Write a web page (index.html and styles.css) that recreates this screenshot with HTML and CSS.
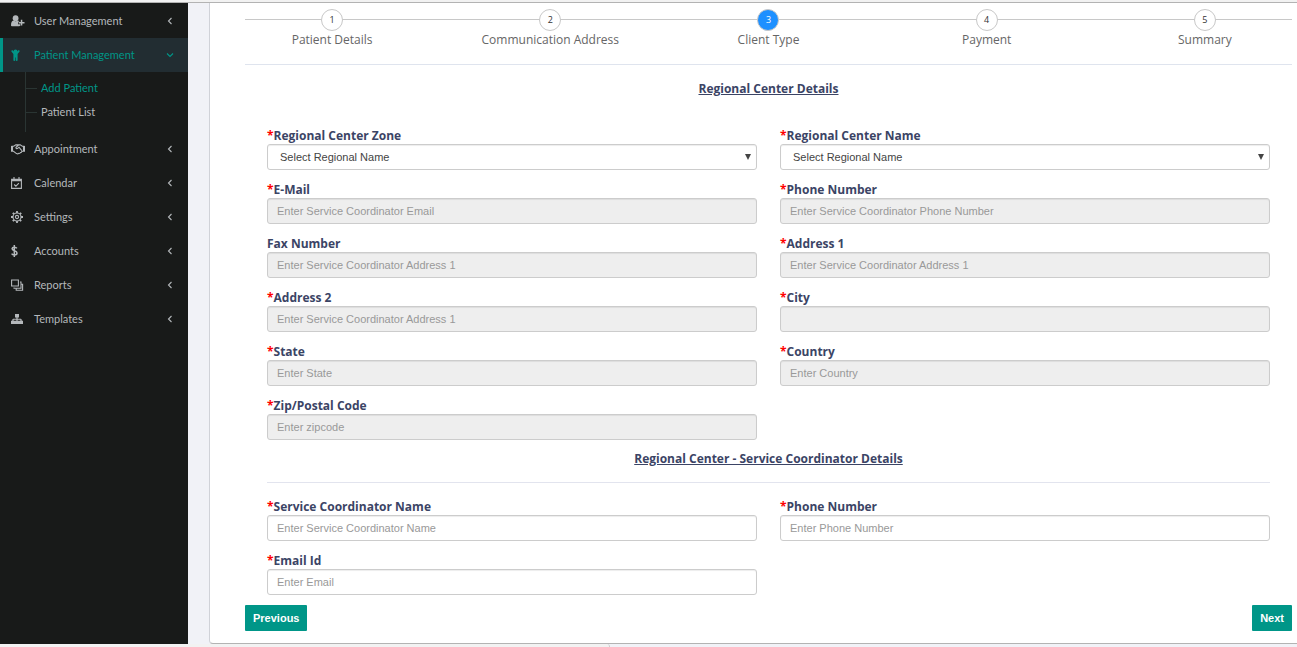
FILE: index.html
```html
<!DOCTYPE html>
<html lang="en">
<head>
<meta charset="utf-8">
<title>Add Patient</title>
<meta name="viewport" content="width=device-width, initial-scale=1">
<link rel="stylesheet" href="styles.css">
</head>
<body>
<div class="app">
  <nav class="sidebar" aria-label="Main">
    <ul class="menu">
      <li><a class="menu-item" href="#users">
        <svg class="icon" viewBox="0 0 14 12"><circle cx="4.6" cy="3.2" r="2.9"/><path d="M0 10.500c0-3 .8-4.700 2.400-4.900 1.300 1 3.100 1 4.400 0 .7.100 1.200.500 1.600 1.100H7v2.600h2.300v1.500c-.3.300-.7.400-1.200.400H1.400C.5 11.200 0 11 0 10.500z"/><path d="M9.800 4.700h1.500v2.200h2.200v1.500h-2.200v2.200H9.800V8.400H7.600V6.900h2.200z"/></svg>
        <span class="menu-text">User Management</span>
        <svg class="arrow" viewBox="0 0 8 8"><path d="M5.500 1 2.500 4l3 3"/></svg></a></li>
      <li><a class="menu-item menu-item-active" href="#patients">
        <svg class="icon" viewBox="0 0 14 12"><circle cx="4.500" cy="2.400" r="2"/><path d="M.6 1.500c.4-.4 1-.4 1.400 0L4 3.900h1L7 1.500c.4-.4 1-.4 1.400 0 .3.400.3.900 0 1.300L6.600 5v6.200c0 1-1.800 1-1.800 0V8.600h-.6v2.600c0 1-1.800 1-1.800 0V5L.6 2.800c-.3-.4-.3-.9 0-1.300z"/></svg>
        <span class="menu-text">Patient Management</span>
        <svg class="arrow" viewBox="0 0 8 8"><path d="M1 2.500l3 3 3-3"/></svg></a>
        <ul class="submenu">
          <li><a class="submenu-item submenu-item-active" href="#add">Add Patient</a></li>
          <li><a class="submenu-item" href="#list">Patient List</a></li>
        </ul></li>
      <li><a class="menu-item" href="#appointment">
        <svg class="icon icon-line" viewBox="0 0 14 12"><path d="M.5 3v5.700M13.500 3v5.700M1.500 3v5.700M12.500 3v5.700M.5 3.200h2.200L4.800 1.900h4.400l2.100 1.300h2.200M.5 8.300h2l3 2.300c1 .5 1.700.3 2.300-.2.900.2 1.400-.2 1.700-.8.800 0 1.200-.4 1.300-1.100l.7-.3h2M7.500 2 5 4.400c-.3.900.8 1.600 1.700.9L8 4.200l2.800 3.500"/></svg>
        <span class="menu-text">Appointment</span>
        <svg class="arrow" viewBox="0 0 8 8"><path d="M5.500 1 2.500 4l3 3"/></svg></a></li>
      <li><a class="menu-item" href="#calendar">
        <svg class="icon icon-line" viewBox="0 0 14 12"><path d="M.6 2.200h9.800v9.200H.6zM.6 3h9.800M.6 3.800h9.800M3 .1v2.500M8 .1v2.500M3.200 7.500l1.700 1.700 3-3"/></svg>
        <span class="menu-text">Calendar</span>
        <svg class="arrow" viewBox="0 0 8 8"><path d="M5.500 1 2.500 4l3 3"/></svg></a></li>
      <li><a class="menu-item" href="#settings">
        <svg class="icon icon-line" viewBox="0 0 14 12"><circle cx="6" cy="6" r="1.600"/><circle cx="6" cy="6" r="4"/><path stroke-width="1.800" d="M6 0v2M6 10v2M0 6h2M10 6h2M1.800 1.800l1.400 1.400M8.800 8.800l1.400 1.400M10.200 1.800 8.800 3.200M3.200 8.800l-1.400 1.400"/></svg>
        <span class="menu-text">Settings</span>
        <svg class="arrow" viewBox="0 0 8 8"><path d="M5.500 1 2.500 4l3 3"/></svg></a></li>
      <li><a class="menu-item" href="#accounts">
        <svg class="icon icon-bold" viewBox="0 0 14 12"><path d="M3.300 0v12M5.800 3.400C5.200 2 1.300 1.500 1.100 3.600c-.1 2.500 4.900 1.900 4.900 4.500C5.900 10.600 1.500 10.500.6 8.600"/></svg>
        <span class="menu-text">Accounts</span>
        <svg class="arrow" viewBox="0 0 8 8"><path d="M5.500 1 2.500 4l3 3"/></svg></a></li>
      <li><a class="menu-item" href="#reports">
        <svg class="icon icon-line" viewBox="0 0 14 12"><path d="M.6 1h6.800v6H.6zM9 3h1v6.200H3V8.500M10.200 5.200h1.400v6H5.200V9.500"/></svg>
        <span class="menu-text">Reports</span>
        <svg class="arrow" viewBox="0 0 8 8"><path d="M5.500 1 2.500 4l3 3"/></svg></a></li>
      <li><a class="menu-item" href="#templates">
        <svg class="icon" viewBox="0 0 14 12"><path d="M4 1h4v3.400H6.600v1.300h3.300l.8.800v1.200h1.300V11H8V7.700h1.400v-1H6.600v1H8V11H4V7.700h1.400v-1H2.600v1H4V11H0V7.700h1.300V6.500l.8-.8h3.300V4.400H4z"/></svg>
        <span class="menu-text">Templates</span>
        <svg class="arrow" viewBox="0 0 8 8"><path d="M5.500 1 2.500 4l3 3"/></svg></a></li>
    </ul>
  </nav>

  <main class="content">
    <form class="card">
      <ol class="steps">
        <li class="step"><span class="step-number">1</span><span>Patient Details</span></li>
        <li class="step"><span class="step-number">2</span><span>Communication Address</span></li>
        <li class="step" aria-current="step"><span class="step-number step-number-current">3</span><span>Client Type</span></li>
        <li class="step"><span class="step-number">4</span><span>Payment</span></li>
        <li class="step"><span class="step-number">5</span><span>Summary</span></li>
      </ol>

      <section class="section">
        <h2 class="section-title">Regional Center Details</h2>
        <div class="fields">
          <div class="field"><label for="zone"><span class="required">*</span>Regional Center Zone</label>
            <div class="select-wrap"><select class="control select" id="zone"><option>Select Regional Name</option></select></div></div>
          <div class="field"><label for="center"><span class="required">*</span>Regional Center Name</label>
            <div class="select-wrap"><select class="control select" id="center"><option>Select Regional Name</option></select></div></div>
          <div class="field"><label for="email"><span class="required">*</span>E-Mail</label>
            <input class="control" id="email" type="email" placeholder="Enter Service Coordinator Email" disabled></div>
          <div class="field"><label for="phone"><span class="required">*</span>Phone Number</label>
            <input class="control" id="phone" type="tel" placeholder="Enter Service Coordinator Phone Number" disabled></div>
          <div class="field"><label for="fax">Fax Number</label>
            <input class="control" id="fax" type="text" placeholder="Enter Service Coordinator Address 1" disabled></div>
          <div class="field"><label for="address1"><span class="required">*</span>Address 1</label>
            <input class="control" id="address1" type="text" placeholder="Enter Service Coordinator Address 1" disabled></div>
          <div class="field"><label for="address2"><span class="required">*</span>Address 2</label>
            <input class="control" id="address2" type="text" placeholder="Enter Service Coordinator Address 1" disabled></div>
          <div class="field"><label for="city"><span class="required">*</span>City</label>
            <input class="control" id="city" type="text" disabled></div>
          <div class="field"><label for="state"><span class="required">*</span>State</label>
            <input class="control" id="state" type="text" placeholder="Enter State" disabled></div>
          <div class="field"><label for="country"><span class="required">*</span>Country</label>
            <input class="control" id="country" type="text" placeholder="Enter Country" disabled></div>
          <div class="field"><label for="zip"><span class="required">*</span>Zip/Postal Code</label>
            <input class="control" id="zip" type="text" placeholder="Enter zipcode" disabled></div>
        </div>
      </section>

      <section class="section section-coordinator">
        <h2 class="section-title">Regional Center - Service Coordinator Details</h2>
        <div class="fields">
          <div class="field"><label for="sc-name"><span class="required">*</span>Service Coordinator Name</label>
            <input class="control" id="sc-name" type="text" placeholder="Enter Service Coordinator Name"></div>
          <div class="field"><label for="sc-phone"><span class="required">*</span>Phone Number</label>
            <input class="control" id="sc-phone" type="tel" placeholder="Enter Phone Number"></div>
          <div class="field"><label for="sc-email"><span class="required">*</span>Email Id</label>
            <input class="control" id="sc-email" type="email" placeholder="Enter Email"></div>
        </div>
      </section>

      <div class="actions">
        <button class="button" type="button">Previous</button>
        <button class="button" type="button">Next</button>
      </div>
    </form>
  </main>
</div>
<div class="status-bar"><div class="status-tab"></div></div>
</body>
</html>
```
FILE: styles.css
```css
* { box-sizing: border-box; }

body {
  margin: 0;
  min-height: 100vh;
  display: flex;
  flex-direction: column;
  border-top: 2px solid #f2f2f2;
  background: #f1f2f7;
  font: 12px/18px "Open Sans", sans-serif;
  color: #3b4465;
}

ul, ol { margin: 0; padding: 0; list-style: none; }

.app {
  flex: 1;
  display: flex;
  border-top: 1px solid #b3b3b3;
}

/* Sidebar */
.sidebar {
  flex: 0 0 188px;
  background: #181a19;
  font-family: Lato, sans-serif;
  font-size: 11px;
}
.menu { padding-top: 1px; }
.menu-item {
  display: flex;
  align-items: center;
  height: 34px;
  padding: 0 14px 0 8px;
  border-left: 3px solid transparent;
  color: #b4b8bb;
  text-decoration: none;
}
.menu-item-active {
  background: #222d32;
  border-left-color: #009688;
  color: #009688;
}
.menu-text { flex: 1; }
.icon {
  width: 14px;
  height: 12px;
  margin-right: 9px;
  fill: currentColor;
}
.icon-line { fill: none; stroke: currentColor; stroke-width: 1.1; }
.icon-bold { fill: none; stroke: currentColor; stroke-width: 1.5; }
.arrow {
  width: 8px;
  height: 8px;
  fill: none;
  stroke: currentColor;
  stroke-width: 1.1;
}
.submenu {
  margin-left: 25px;
  padding: 4px 0 8px;
  border-left: 1px solid #2a3533;
}
.submenu-item {
  display: flex;
  align-items: center;
  gap: 4px;
  height: 24px;
  color: #b4b8bb;
  text-decoration: none;
}
.submenu-item::before {
  content: "";
  width: 11px;
  border-top: 1px solid #2a3533;
}
.submenu-item-active { color: #009688; }

/* Card */
.content {
  flex: 1;
  display: flex;
  padding-left: 21px;
}
.card {
  flex: 1;
  padding: 6px 5px 12px 35px;
  background: #fff;
  border: 1px solid #d0d2d8;
  border-width: 0 0 1px 1px;
  border-bottom-color: #b3b3b3;
  border-radius: 0 0 0 4px;
}

/* Step indicator */
.steps {
  display: grid;
  grid-template-columns: repeat(5, 1fr);
  column-gap: 44px;
  height: 56px;
  border-bottom: 1px solid #dfe4ee;
  background: linear-gradient(#c8c8c8, #c8c8c8) 0 10px / 100% 1px no-repeat;
}
.step {
  display: flex;
  flex-direction: column;
  align-items: center;
  white-space: nowrap;
  color: #666;
}
.step-number {
  width: 22px;
  height: 22px;
  border: 1px solid #c8c8c8;
  border-radius: 50%;
  background: #fff;
  font-size: 9px;
  line-height: 20px;
  text-align: center;
  color: #333;
}
.step-number-current {
  background: #1e90ff;
  color: #fff;
}

/* Form */
.section { padding: 15px 22px 0; }
.section-title {
  margin: 0 0 29px;
  font-size: 12px;
  line-height: 18px;
  text-align: center;
  text-decoration: underline;
}
.section-coordinator { padding-top: 10px; }
.section-coordinator .section-title { margin-bottom: 14px; }
.section-coordinator .fields {
  padding-top: 15px;
  border-top: 1px solid #e2e4ee;
}
.fields {
  display: grid;
  grid-template-columns: 1fr 1fr;
  gap: 11px 23px;
}
.field label {
  display: block;
  line-height: 17px;
  font-weight: 700;
}
.required { color: #f00; }
.control {
  display: block;
  width: 100%;
  height: 26px;
  padding: 0 9px;
  border: 1px solid #ccc;
  border-radius: 3px;
  background: #fff;
  box-shadow: inset 0 1px 1px rgba(0, 0, 0, .075);
  font: 11px "Liberation Sans", sans-serif;
  color: #444;
}
.control::placeholder { color: #999; opacity: 1; }
.control:disabled { background: #eee; }
.select-wrap { display: grid; align-items: center; }
.select-wrap > *, .select-wrap::after { grid-area: 1 / 1; }
.select-wrap::after {
  content: "";
  justify-self: end;
  margin-right: 6px;
  border: solid transparent;
  border-width: 6px 3px 0;
  border-top-color: #444;
  pointer-events: none;
}
.select { appearance: none; padding: 0 12px; }

.actions {
  display: flex;
  justify-content: space-between;
  padding-top: 10px;
}
.button {
  height: 26px;
  padding: 0 8px;
  border: 0;
  border-radius: 1px;
  background: #009688;
  font: bold 11px "Liberation Sans", sans-serif;
  color: #fff;
}

.status-bar { height: 3px; background: #f1f2f7; }
.status-tab {
  width: 47%;
  height: 3px;
  background: #f2f2f2;
  border-right: 1px solid #ccc;
  border-radius: 0 3px 0 0;
}
```
